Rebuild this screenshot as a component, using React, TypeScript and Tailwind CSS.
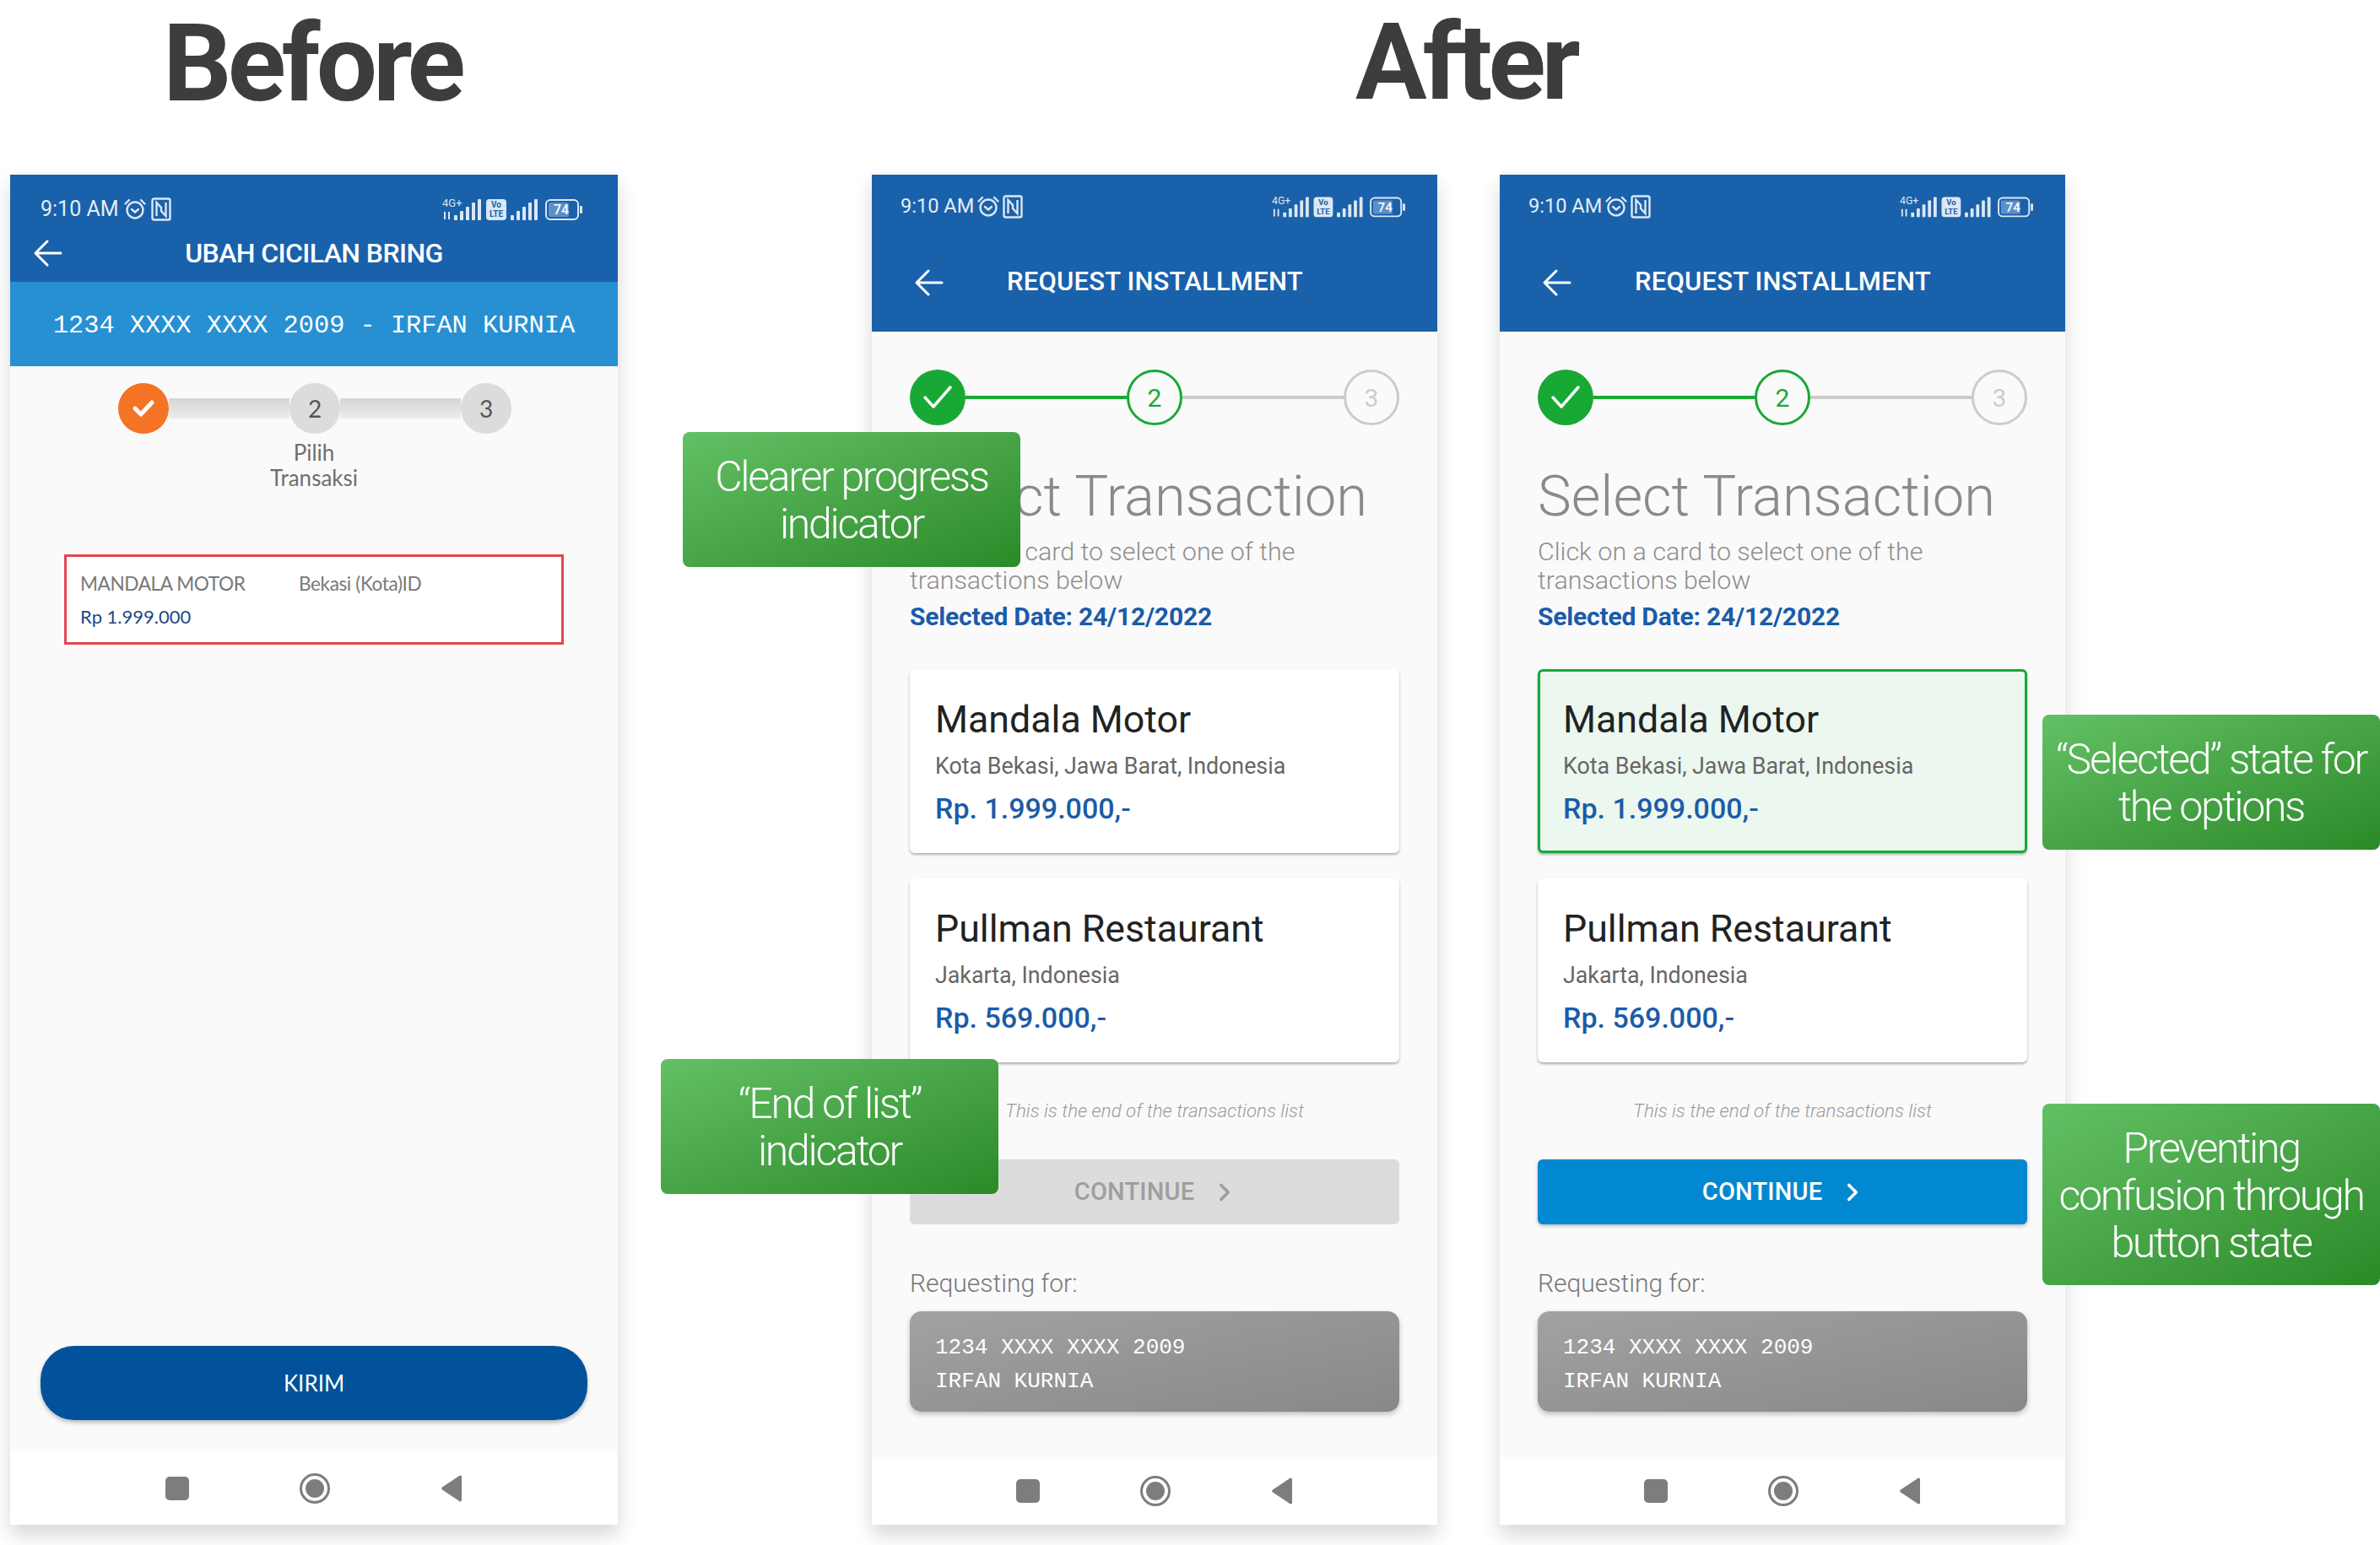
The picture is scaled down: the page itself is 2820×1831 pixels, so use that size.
import type { ReactNode } from "react";
import { ChevronRight } from "lucide-react";

function AlarmIcon() {
  return (
    <svg width="28" height="28" viewBox="0 0 28 28" fill="none" stroke="#dbe7f3" strokeWidth="2.4" strokeLinecap="round" strokeLinejoin="round">
      <circle cx="14" cy="15" r="9.5" />
      <path d="M10 14l4 3.5 4-3.5" />
      <path d="M2.5 7.5L7 3M25.5 7.5L21 3" />
    </svg>
  );
}

function NfcIcon() {
  return (
    <svg width="24" height="28" viewBox="0 0 24 28" fill="none" stroke="#dbe7f3" strokeWidth="2.4">
      <rect x="1.500" y="1.500" width="21" height="25" rx="2" />
      <path d="M6.500 22V6l5.500 6v5M17.500 6v16L12 16v-5" />
    </svg>
  );
}

function SignalBars({ x }: { x: number }) {
  return (
    <g fill="#dbe7f3">
      <rect x={x} y="22" width="4" height="6" rx="1" />
      <rect x={x + 7} y="17" width="4" height="11" rx="1" />
      <rect x={x + 14} y="12" width="4" height="16" rx="1" />
      <rect x={x + 21} y="7" width="4" height="21" rx="1" />
      <rect x={x + 28} y="3" width="4" height="25" rx="1" />
    </g>
  );
}

function StatusRight({ width }: { width: number }) {
  return (
    <svg width={width} height="30" viewBox="0 0 166 30" fill="none">
      <text x="0" y="12" fontFamily="Roboto, sans-serif" fontSize="13" fill="#dbe7f3">4G+</text>
      <path d="M3 18v9M8 18v9" stroke="#dbe7f3" strokeWidth="2" />
      <SignalBars x={14} />
      <rect x="52" y="3" width="24" height="25" rx="4" fill="#dbe7f3" />
      <text x="64" y="13" textAnchor="middle" fontFamily="Roboto, sans-serif" fontSize="10" fontWeight="700" fill="#1a61ab">Vo</text>
      <text x="64" y="24" textAnchor="middle" fontFamily="Roboto, sans-serif" fontSize="10" fontWeight="700" fill="#1a61ab">LTE</text>
      <SignalBars x={81} />
      <rect x="123" y="4" width="38" height="23" rx="5" stroke="#dbe7f3" strokeWidth="2" />
      <rect x="126" y="7" width="24" height="17" rx="2" fill="#5c8fc8" />
      <text x="141" y="21" textAnchor="middle" fontFamily="Roboto, sans-serif" fontSize="16" fontWeight="500" fill="#ffffff">74</text>
      <rect x="163" y="11" width="3" height="9" rx="1" fill="#dbe7f3" />
    </svg>
  );
}

function StatusBar({ padding, textSize, iconsWidth, gap }: { padding: string; textSize: string; iconsWidth: number; gap: string }) {
  return (
    <div className={`flex h-[30px] items-center justify-between ${padding}`}>
      <div className={`flex items-center text-[#e4edf6] ${textSize} ${gap}`}>
        <span>9:10 AM</span>
        <AlarmIcon />
        <NfcIcon />
      </div>
      <StatusRight width={iconsWidth} />
    </div>
  );
}

function BackArrow() {
  return (
    <svg width="36" height="36" viewBox="0 0 36 36" fill="none" stroke="#ffffff" strokeWidth="3" strokeLinecap="round" strokeLinejoin="round">
      <path d="M33 18H4M17 4L3 18l14 14" />
    </svg>
  );
}

function NavBar({ height, gap }: { height: string; gap: string }) {
  return (
    <div className={`flex shrink-0 items-center justify-center bg-white ${height} ${gap}`}>
      <div className="h-[28px] w-[28px] rounded-[5px] bg-[#7d7d7d]" />
      <div className="flex h-[36px] w-[36px] items-center justify-center rounded-full border-[3px] border-[#7d7d7d]">
        <div className="h-[22px] w-[22px] rounded-full bg-[#7d7d7d]" />
      </div>
      <svg width="27" height="34" viewBox="0 0 27 34">
        <path d="M25 3v28a1.500 1.500 0 0 1-2.400 1.200L2 18.500a2 2 0 0 1 0-3L22.600 1.800A1.500 1.500 0 0 1 25 3z" fill="#7d7d7d" />
      </svg>
    </div>
  );
}

function BeforePhone() {
  return (
    <div className="flex h-[1600px] w-[720px] shrink-0 flex-col bg-[#fafafa] font-['Lato','Open_Sans',sans-serif] shadow-[0_12px_22px_rgba(0,0,0,0.16)]">
      <div className="h-[127px] bg-[#1a61ab] pt-[26px] font-['Roboto',sans-serif]">
        <StatusBar padding="pl-[36px] pr-[40px]" textSize="text-[25px]" iconsWidth={170} gap="gap-[5px]" />
        <div className="relative mt-[17px] flex h-[40px] items-center justify-center">
          <div className="absolute left-[27px] top-[2px] flex">
            <BackArrow />
          </div>
          <span className="text-[32px] font-medium tracking-[-0.6px] text-white">UBAH CICILAN BRING</span>
        </div>
      </div>
      <div className="flex h-[100px] items-center justify-center bg-[#2790d2] pt-[5px] font-['Liberation_Mono',monospace] text-[30.300px] text-white">
        1234 XXXX XXXX 2009 - IRFAN KURNIA
      </div>
      <div className="mt-[20px] flex items-center pl-[128px] pr-[126px]">
        <div className="flex h-[60px] w-[60px] shrink-0 items-center justify-center rounded-full bg-[#f47325]">
          <svg width="28" height="24" viewBox="0 0 28 24" fill="none" stroke="#ffffff" strokeWidth="5" strokeLinecap="round" strokeLinejoin="round">
            <path d="M4 12l7 7L24 5" />
          </svg>
        </div>
        <div className="h-[24px] flex-1 bg-gradient-to-b from-[#d6d6d6] to-[#ececec]" />
        <div className="flex h-[60px] w-[60px] shrink-0 items-center justify-center rounded-full bg-[#dcdcdc] text-[28px] text-[#555555]">2</div>
        <div className="h-[24px] flex-1 bg-gradient-to-b from-[#d6d6d6] to-[#ececec]" />
        <div className="flex h-[60px] w-[60px] shrink-0 items-center justify-center rounded-full bg-[#dcdcdc] text-[28px] text-[#555555]">3</div>
      </div>
      <div className="mt-[7px] text-center text-[26px] leading-[30px] text-[#6e6e6e]">
        Pilih
        <br />
        Transaksi
      </div>
      <div className="mx-[64px] mt-[76px] h-[107px] border-[3px] border-[#e2474f] bg-white px-[16px] pt-[16px] text-[22.600px] leading-[32px]">
        <div className="flex text-[#787878]">
          <span className="w-[259px] tracking-[-0.4px]">MANDALA MOTOR</span>
          <span className="tracking-[-0.4px]">Bekasi (Kota)ID</span>
        </div>
        <div className="mt-[7px] text-[22px] text-[#1c4a80]">Rp 1.999.000</div>
      </div>
      <div className="mx-[36px] mt-auto flex h-[88px] shrink-0 items-center justify-center rounded-[40px] bg-[#02529b] text-[26px] text-white shadow-[0_3px_5px_rgba(0,0,0,0.25)]">
        KIRIM
      </div>
      <div className="h-[37px] shrink-0" />
      <NavBar height="h-[87px]" gap="gap-[131px]" />
    </div>
  );
}

function Step({ n, state }: { n: string; state: "done" | "active" | "todo" }) {
  if (state === "done") {
    return (
      <div className="flex h-[66px] w-[66px] shrink-0 items-center justify-center rounded-full bg-[#18a835]">
        <svg width="36" height="30" viewBox="0 0 36 30" fill="none" stroke="#ffffff" strokeWidth="3.500" strokeLinecap="round" strokeLinejoin="round">
          <path d="M3 15l10 11L33 3" />
        </svg>
      </div>
    );
  }
  return (
    <div
      className={
        state === "active"
          ? "flex h-[66px] w-[66px] shrink-0 items-center justify-center rounded-full border-[3px] border-[#18a835] text-[30px] text-[#18a835]"
          : "flex h-[66px] w-[66px] shrink-0 items-center justify-center rounded-full border-[3px] border-[#cccccc] text-[30px] text-[#cccccc]"
      }
    >
      {n}
    </div>
  );
}

function TxCard({ name, place, price, selected }: { name: string; place: string; price: string; selected?: boolean }) {
  return (
    <div
      className={
        selected
          ? "h-[218px] rounded-[6px] border-[3px] border-[#18a835] bg-[#ebf7ef] pl-[27px] pt-[31px] shadow-[0_2px_3px_rgba(0,0,0,0.3)]"
          : "h-[218px] rounded-[6px] bg-white pl-[30px] pt-[34px] shadow-[0_2px_3px_rgba(0,0,0,0.3)]"
      }
    >
      <div className="text-[44.700px] leading-[52px] text-[#222222]">{name}</div>
      <div className="mt-[13px] text-[26.800px] leading-[32px] text-[#666666]">{place}</div>
      <div className="mt-[13px] text-[34px] font-medium leading-[42px] text-[#1a5ca8]">{price}</div>
    </div>
  );
}

function AfterPhone({ selected }: { selected?: boolean }) {
  return (
    <div className="flex h-[1600px] w-[670px] shrink-0 flex-col bg-[#fafafa] font-['Roboto',sans-serif] shadow-[0_12px_22px_rgba(0,0,0,0.16)]">
      <div className="h-[186px] shrink-0 bg-[#1a61ab] pt-[23px]">
        <StatusBar padding="pl-[34px] pr-[38px]" textSize="text-[23.600px]" iconsWidth={158} gap="gap-[3px]" />
        <div className="relative mt-[54px] flex h-[40px] items-center pl-[160px]">
          <div className="absolute left-[50px] top-[3px] flex">
            <BackArrow />
          </div>
          <span className="text-[31px] font-medium tracking-[0.2px] text-white">REQUEST INSTALLMENT</span>
        </div>
      </div>
      <div className="flex flex-1 flex-col px-[45px] pt-[45px]">
        <div className="flex items-center">
          <Step n="1" state="done" />
          <div className="h-[4px] flex-1 bg-[#18a835]" />
          <Step n="2" state="active" />
          <div className="h-[4px] flex-1 bg-[#cccccc]" />
          <Step n="3" state="todo" />
        </div>
        <div className="mt-[44px] text-[67px] font-light leading-[80px] text-[#8a8a8a]">Select Transaction</div>
        <div className="mt-[9px] text-[30.400px] font-light leading-[34px] text-[#8e8e8e]">
          Click on a card to select one of the
          <br />
          transactions below
        </div>
        <div className="mt-[8px] text-[30px] font-bold leading-[36px] tracking-[-0.2px] text-[#1a5ca8]">Selected Date: 24/12/2022</div>
        <div className="mt-[44px] flex flex-col gap-[30px]">
          <TxCard name="Mandala Motor" place="Kota Bekasi, Jawa Barat, Indonesia" price="Rp. 1.999.000,-" selected={selected} />
          <TxCard name="Pullman Restaurant" place="Jakarta, Indonesia" price="Rp. 569.000,-" />
        </div>
        <div className="mt-[42px] text-center text-[22.300px] font-light italic leading-[30px] text-[#9a9a9a]">
          This is the end of the transactions list
        </div>
        <div
          className={
            selected
              ? "mt-[43px] flex h-[77px] items-center justify-center gap-[19px] rounded-[6px] bg-[#0288d1] pl-[5px] text-[29px] font-medium tracking-[0.2px] text-white shadow-[0_2px_4px_rgba(0,0,0,0.25)]"
              : "mt-[43px] flex h-[77px] items-center justify-center gap-[19px] rounded-[6px] bg-[#dcdcdc] pl-[5px] text-[29px] font-medium tracking-[0.2px] text-[#9e9e9e]"
          }
        >
          CONTINUE
          <ChevronRight size={34} strokeWidth={2.5} />
        </div>
        <div className="mt-[52px] text-[30px] font-light leading-[36px] text-[#777777]">Requesting for:</div>
        <div className="mt-[15px] h-[119px] rounded-[14px] bg-gradient-to-br from-[#a2a2a2] to-[#888888] pl-[30px] pt-[23px] font-['Liberation_Mono',monospace] text-[26px] leading-[40px] text-white shadow-[0_3px_6px_rgba(0,0,0,0.25)]">
          1234 XXXX XXXX 2009
          <br />
          IRFAN KURNIA
        </div>
      </div>
      <NavBar height="h-[80px]" gap="gap-[119px]" />
    </div>
  );
}

function Callout({ pos, children }: { pos: string; children: ReactNode }) {
  return (
    <div
      className={`absolute flex w-[400px] items-center justify-center rounded-[8px] bg-gradient-to-br from-[#63c165] to-[#2a8a27] pt-[2px] text-center font-['Roboto',sans-serif] text-[50px] font-[350] leading-[56px] tracking-[-2.3px] text-white ${pos}`}
    >
      <div>{children}</div>
    </div>
  );
}

export default function App() {
  return (
    <div className="relative h-[1831px] w-[2820px] overflow-hidden bg-white">
      <div className="flex h-[207px] items-start pt-[11px] font-['Roboto',sans-serif] leading-none tracking-[-5px] text-[#3d3d3d]">
        <h1 className="ml-[193px] w-[1413px] text-[128px] font-bold">Before</h1>
        <h1 className="text-[126px] font-bold">After</h1>
      </div>
      <div className="flex pl-[12px]">
        <BeforePhone />
        <div className="ml-[301px]">
          <AfterPhone />
        </div>
        <div className="ml-[74px]">
          <AfterPhone selected />
        </div>
      </div>
      <Callout pos="left-[809px] top-[512px] h-[160px]">
        Clearer progress
        <br />
        indicator
      </Callout>
      <Callout pos="left-[783px] top-[1255px] h-[160px]">
        “End of list”
        <br />
        indicator
      </Callout>
      <Callout pos="left-[2420px] top-[847px] h-[160px]">
        “Selected” state for
        <br />
        the options
      </Callout>
      <Callout pos="left-[2420px] top-[1308px] h-[215px]">
        Preventing
        <br />
        confusion through
        <br />
        button state
      </Callout>
    </div>
  );
}
